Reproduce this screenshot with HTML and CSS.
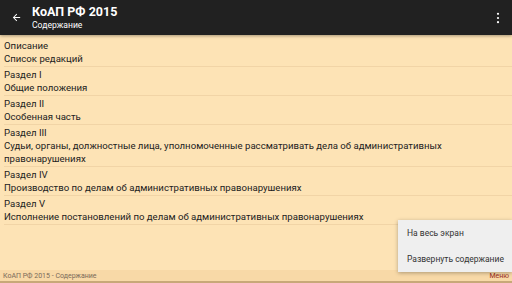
FILE: index.html
```html
<!DOCTYPE html>
<html lang="ru">
<head>
<meta charset="utf-8">
<link rel="stylesheet" href="styles.css">
</head>
<body>
<div class="app">
  <header class="toolbar">
    <svg class="back" width="11" height="11" viewBox="0 0 24 24"><path d="M20 11H7.83l5.59-5.59L12 4l-8 8 8 8 1.41-1.41L7.83 13H20v-2z" fill="#fff"/></svg>
    <div class="titles">
      <div class="title">КоАП РФ 2015</div>
      <div class="subtitle">Содержание</div>
    </div>
    <svg class="more" width="4" height="12" viewBox="0 0 4 12"><circle cx="2" cy="1.8" r="1.1" fill="#fff"/><circle cx="2" cy="6" r="1.1" fill="#fff"/><circle cx="2" cy="10.2" r="1.1" fill="#fff"/></svg>
  </header>
  <main class="content">
    <div class="item"><div>Описание</div><div>Список редакций</div></div>
    <div class="item"><div>Раздел I</div><div>Общие положения</div></div>
    <div class="item"><div>Раздел II</div><div>Особенная часть</div></div>
    <div class="item"><div>Раздел III</div><div>Судьи, органы, должностные лица, уполномоченные рассматривать дела об административных правонарушениях</div></div>
    <div class="item"><div>Раздел IV</div><div>Производство по делам об административных правонарушениях</div></div>
    <div class="item"><div>Раздел V</div><div>Исполнение постановлений по делам об административных правонарушениях</div></div>
  </main>
  <footer class="status">
    <span>КоАП РФ 2015 - Содержание</span>
    <span class="menu-link">Меню</span>
  </footer>
  <div class="popup">
    <div class="popup-item">На весь экран</div>
    <div class="popup-item">Развернуть содержание</div>
  </div>
</div>
</body>
</html>
```
FILE: styles.css
```css
* { box-sizing: border-box; }
html, body { margin: 0; padding: 0; }
body {
  width: 512px;
  height: 283px;
  overflow: hidden;
  font-family: Roboto, "Noto Sans", sans-serif;
  background: #fde3b5;
}
.app {
  position: relative;
  width: 512px;
  height: 283px;
  display: flex;
  flex-direction: column;
}
.toolbar {
  height: 35px;
  background: #212121;
  display: flex;
  align-items: center;
  padding: 0 10px 0 11px;
  color: #fff;
  box-shadow: 0 1px 3px rgba(0,0,0,0.35);
  position: relative;
  z-index: 1;
}
.back { margin-right: 10px; }
.titles { flex: 1; display: flex; flex-direction: column; }
.title { font-size: 12.5px; font-weight: 700; line-height: 15px; }
.subtitle { font-size: 8.6px; line-height: 12px; }
.more { margin-right: 2px; }
.content {
  flex: 1;
  padding: 4px 0 0 4px;
  color: #212121;
  font-size: 9.6px;
  line-height: 13px;
}
.item {
  border-bottom: 1px solid #f1d4a6;
  padding: 0 0 1px;
}
.item + .item { padding-top: 1px; }
.status {
  height: 13px;
  background: #f8d9a7;
  border-bottom: 2px solid #c8a878;
  display: flex;
  justify-content: space-between;
  align-items: center;
  padding: 0 3px;
  font-size: 7px;
  color: #7a6a58;
}
.menu-link { color: #9b2d20; }
.popup {
  position: absolute;
  right: 0;
  top: 220px;
  width: 114px;
  background: #efefef;
  box-shadow: 0 1px 4px rgba(0,0,0,0.3);
}
.popup-item {
  font-size: 8.5px;
  color: #333;
  height: 26px;
  line-height: 26px;
  padding-left: 9px;
}
```
